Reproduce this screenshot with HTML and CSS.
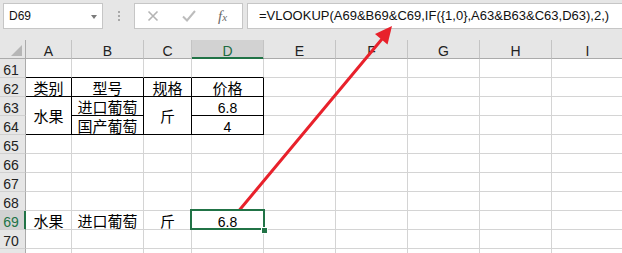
FILE: index.html
```html
<!DOCTYPE html>
<html lang="zh">
<head>
<meta charset="utf-8">
<title>VLOOKUP</title>
<link rel="stylesheet" href="styles.css">
</head>
<body>
<div class="fbar">
  <div class="namebox"><span>D69</span><span class="caret"></span></div>
  <div class="grip"><i></i><i></i><i></i></div>
  <div class="fbtns">
    <svg class="ico" width="14" height="14" viewBox="0 0 14 14"><path d="M2.5 2.5 L11.5 11.5 M11.5 2.5 L2.5 11.5" stroke="#b4b4b4" stroke-width="1.6" fill="none"/></svg>
    <svg class="ico" width="14" height="14" viewBox="0 0 14 14"><path d="M1 7.5 L5 11.5 L13 2" stroke="#bcbcbc" stroke-width="2" fill="none"/></svg>
    <span class="fx">f<span class="fxs">x</span></span>
  </div>
  <div class="finput">=VLOOKUP(A69&amp;B69&amp;C69,IF({1,0},A63&amp;B63&amp;C63,D63),2,)</div>
</div>
<div class="sheet">
  <div class="corner"><span class="tri"></span></div>
  <div class="ch">A</div><div class="ch">B</div><div class="ch">C</div><div class="ch on">D</div><div class="ch">E</div><div class="ch">F</div><div class="ch">G</div><div class="ch">H</div><div class="ch">I</div>

  <div class="rh">61</div>
  <div class="c tt"></div><div class="c tt"></div><div class="c tt"></div><div class="c tt"></div>
  <div class="c"></div><div class="c"></div><div class="c"></div><div class="c"></div><div class="c"></div>

  <div class="rh">62</div>
  <div class="c zh tb">类别</div><div class="c zh tb">型号</div><div class="c zh tb">规格</div><div class="c zh tb">价格</div>
  <div class="c"></div><div class="c"></div><div class="c"></div><div class="c"></div><div class="c"></div>

  <div class="rh">63</div>
  <div class="c zh tb m">水果</div><div class="c zh tb">进口葡萄</div><div class="c zh tb m">斤</div><div class="c tb">6.8</div>
  <div class="c"></div><div class="c"></div><div class="c"></div><div class="c"></div><div class="c"></div>

  <div class="rh">64</div>
  <div class="c zh tb">国产葡萄</div><div class="c tb">4</div>
  <div class="c"></div><div class="c"></div><div class="c"></div><div class="c"></div><div class="c"></div>

  <div class="rh">65</div>
  <div class="c"></div><div class="c"></div><div class="c"></div><div class="c"></div><div class="c"></div><div class="c"></div><div class="c"></div><div class="c"></div><div class="c"></div>
  <div class="rh">66</div>
  <div class="c"></div><div class="c"></div><div class="c"></div><div class="c"></div><div class="c"></div><div class="c"></div><div class="c"></div><div class="c"></div><div class="c"></div>
  <div class="rh">67</div>
  <div class="c"></div><div class="c"></div><div class="c"></div><div class="c"></div><div class="c"></div><div class="c"></div><div class="c"></div><div class="c"></div><div class="c"></div>
  <div class="rh">68</div>
  <div class="c"></div><div class="c"></div><div class="c"></div><div class="c"></div><div class="c"></div><div class="c"></div><div class="c"></div><div class="c"></div><div class="c"></div>

  <div class="rh on">69</div>
  <div class="c zh">水果</div><div class="c zh">进口葡萄</div><div class="c zh">斤</div><div class="c act">6.8</div>
  <div class="c"></div><div class="c"></div><div class="c"></div><div class="c"></div><div class="c"></div>

  <div class="rh">70</div>
  <div class="c"></div><div class="c"></div><div class="c"></div><div class="c"></div><div class="c"></div><div class="c"></div><div class="c"></div><div class="c"></div><div class="c"></div>
  <div class="rh"></div>
  <div class="c"></div><div class="c"></div><div class="c"></div><div class="c"></div><div class="c"></div><div class="c"></div><div class="c"></div><div class="c"></div><div class="c"></div>
</div>
<svg class="arrow" width="622" height="253" viewBox="0 0 622 253">
  <line x1="237" y1="213" x2="382" y2="39" stroke="#e8212b" stroke-width="3" stroke-linecap="round"/>
  <polygon points="392,26 387.5,44.5 375,34" fill="#e8212b"/>
</svg>
</body>
</html>
```

FILE: styles.css
```css
html, body {
  margin: 0;
  padding: 0;
}
body {
  width: 622px;
  height: 253px;
  overflow: hidden;
  position: relative;
  background: #e6e6e6;
  font-family: "Liberation Sans", Arial, "Noto Sans CJK SC", sans-serif;
  color: #000;
}

/* formula bar */
.fbar {
  display: flex;
  align-items: flex-start;
  height: 40px;
  box-sizing: border-box;
  padding: 3px 0 0 3px;
}
.namebox {
  width: 100px;
  height: 26px;
  box-sizing: border-box;
  background: #fff;
  border: 1px solid #c6c6c6;
  display: flex;
  align-items: center;
  justify-content: space-between;
  padding: 0 5px 0 5px;
  font-size: 12px;
  color: #111;
}
.caret {
  width: 0;
  height: 0;
  border-left: 3.5px solid transparent;
  border-right: 3.5px solid transparent;
  border-top: 4px solid #7a7a7a;
  margin-top: 1px;
}
.grip {
  width: 31px;
  height: 26px;
  display: flex;
  flex-direction: column;
  align-items: center;
  justify-content: center;
  gap: 2px;
}
.grip i {
  display: block;
  width: 2px;
  height: 2px;
  background: #a8a8a8;
}
.fbtns {
  width: 109px;
  height: 26px;
  box-sizing: border-box;
  background: #fff;
  border: 1px solid #c6c6c6;
  display: flex;
  align-items: center;
  padding-left: 11px;
  gap: 22px;
}
.ico {
  display: block;
}
.fx {
  font-family: "Liberation Serif", "Times New Roman", serif;
  font-style: italic;
  font-size: 15px;
  color: #6a6a6a;
  line-height: 14px;
}
.fxs {
  font-size: 11px;
}
.finput {
  flex: 1;
  height: 26px;
  box-sizing: border-box;
  margin-left: 4px;
  margin-right: -8px;
  background: #fff;
  border: 1px solid #c6c6c6;
  padding-left: 11px;
  font-size: 13px;
  line-height: 24px;
  color: #111;
  white-space: nowrap;
}

/* sheet grid */
.sheet {
  display: grid;
  grid-template-columns: 26px 46px 72px 48px 72px 72px 72px 72px 72px 72px;
  grid-template-rows: repeat(11, 19px) 5px;
  width: 624px;
  overflow: hidden;
}
.sheet > div {
  box-sizing: border-box;
  display: flex;
  align-items: flex-end;
  justify-content: center;
  font-size: 14px;
  line-height: 14px;
}
.corner {
  background: #e6e6e6;
  border-right: 1px solid #ababab;
  border-bottom: 1px solid #ababab;
  justify-content: flex-end !important;
  padding: 0 3px 2px 0;
}
.tri {
  display: block;
  width: 11px;
  height: 11px;
  background: #b6b6b6;
  clip-path: polygon(100% 0, 100% 100%, 0 100%);
}
.ch {
  background: #e6e6e6;
  border-right: 1px solid #c4c4c4;
  border-bottom: 1px solid #ababab;
  color: #222;
}
.ch.on {
  background: #d2d2d2;
  color: #1e6b41;
  border-bottom-color: #217346;
  box-shadow: inset 0 -1px #217346;
}
.rh {
  background: #e6e6e6;
  border-right: 1px solid #ababab;
  border-bottom: 1px solid #d0d0d0;
  color: #222;
  padding-right: 3px;
}
.rh.on {
  background: #d2d2d2;
  color: #217346;
  border-right-color: #217346;
  box-shadow: inset -1px 0 #217346;
}
.c {
  background: #fff;
  border-right: 1px solid #d4d4d4;
  border-bottom: 1px solid #d4d4d4;
}
.zh {
  font-family: "Noto Sans CJK SC", sans-serif;
  font-size: 15px !important;
  line-height: 17px !important;
}
.tt {
  border-bottom-color: #000;
}
.tb {
  border-right-color: #000;
  border-bottom-color: #000;
}
.m {
  grid-row: span 2;
  align-items: center !important;
}
.act {
  position: relative;
  z-index: 2;
}
.act::after {
  content: "";
  position: absolute;
  top: -2px;
  left: -2px;
  right: -2px;
  bottom: -1px;
  border: 2px solid #217346;
}
.act::before {
  content: "";
  position: absolute;
  right: -4px;
  bottom: -4px;
  width: 5px;
  height: 5px;
  background: #217346;
  box-shadow: 0 0 0 1px #fff;
  z-index: 3;
}

.arrow {
  position: absolute;
  left: 0;
  top: 0;
  pointer-events: none;
}
```
